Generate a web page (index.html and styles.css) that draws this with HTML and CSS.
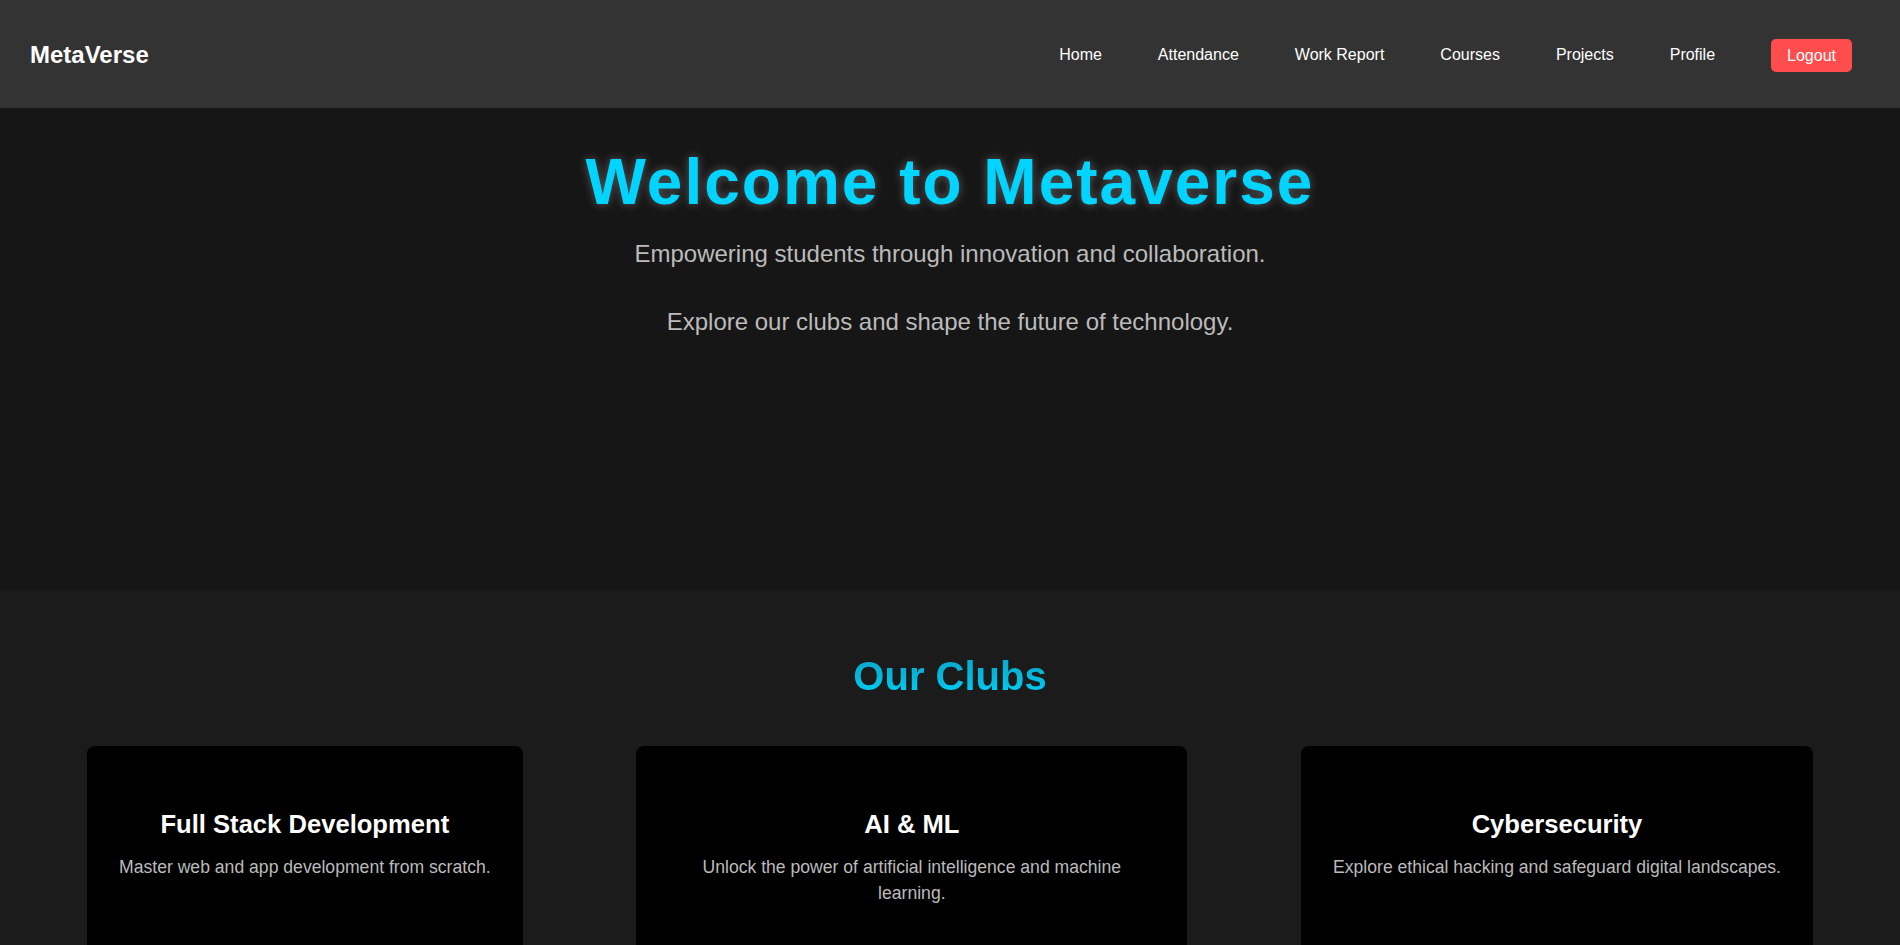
FILE: index.html
```html
<!DOCTYPE html>
<html lang="en">
<head>
<meta charset="utf-8">
<title>MetaVerse</title>
<link rel="stylesheet" href="styles.css">
</head>
<body>
<header class="topbar">
  <div class="logo">MetaVerse</div>
  <nav>
    <ul class="nav-list">
      <li><a class="nav-link" href="#">Home</a></li>
      <li><a class="nav-link" href="#">Attendance</a></li>
      <li><a class="nav-link" href="#">Work Report</a></li>
      <li><a class="nav-link" href="#">Courses</a></li>
      <li><a class="nav-link" href="#">Projects</a></li>
      <li><a class="nav-link" href="#">Profile</a></li>
      <li><a class="logout-btn" href="#">Logout</a></li>
    </ul>
  </nav>
</header>

<section class="hero">
  <h1 class="hero-title">Welcome to Metaverse</h1>
  <p class="hero-sub">Empowering students through innovation and collaboration.</p>
  <p class="hero-sub second">Explore our clubs and shape the future of technology.</p>
</section>

<section class="clubs">
  <h2 class="clubs-title">Our Clubs</h2>
  <div class="club-grid">
    <div class="club-card">
      <h3 class="club-name">Full Stack Development</h3>
      <p class="club-desc">Master web and app development from scratch.</p>
    </div>
    <div class="club-card">
      <h3 class="club-name">AI &amp; ML</h3>
      <p class="club-desc">Unlock the power of artificial intelligence and machine learning.</p>
    </div>
    <div class="club-card">
      <h3 class="club-name">Cybersecurity</h3>
      <p class="club-desc">Explore ethical hacking and safeguard digital landscapes.</p>
    </div>
  </div>
</section>
</body>
</html>
```

FILE: styles.css
```css
* {
  box-sizing: border-box;
}

html, body {
  margin: 0;
  padding: 0;
}

body {
  font-family: "Liberation Sans", Arial, sans-serif;
  background: #1b1b1b;
  color: #fff;
}

.topbar {
  height: 108px;
  background: #333333;
  display: flex;
  align-items: center;
  justify-content: space-between;
  padding: 0 48px 0 30px;
}

.logo {
  font-size: 24px;
  font-weight: bold;
  color: #fff;
  position: relative;
  top: 1px;
}

.nav-list {
  list-style: none;
  margin: 2px 0 0;
  padding: 0;
  display: flex;
  align-items: center;
  gap: 56px;
}

.nav-link {
  color: #fff;
  text-decoration: none;
  font-size: 16px;
}

.logout-btn {
  display: block;
  background: #ff4d4d;
  color: #fff;
  text-decoration: none;
  font-size: 16px;
  line-height: 17px;
  padding: 8px 16px;
  border-radius: 5px;
}

.hero {
  height: 482px;
  background: #161616;
  text-align: center;
  padding-top: 37px;
}

.hero-title {
  margin: 0;
  font-size: 64px;
  font-weight: bold;
  letter-spacing: 2px;
  color: #00d4ff;
  line-height: normal;
  text-shadow: 0 0 10px rgba(255, 255, 255, 0.3);
}

.hero-sub {
  margin: 21px 0 0;
  font-size: 24px;
  color: #bbbbbb;
  line-height: normal;
}

.hero-sub.second {
  margin-top: 40px;
}

.clubs {
  background: #1b1b1b;
  padding: 64px 87px 60px;
  text-align: center;
}

.clubs-title {
  margin: 0 0 47px;
  font-size: 40px;
  font-weight: bold;
  line-height: normal;
  background: linear-gradient(180deg, #0aa6c8 0%, #05b8dc 50%, #00d4ff 100%);
  -webkit-background-clip: text;
  background-clip: text;
  color: transparent;
  display: inline-block;
}

.club-grid {
  display: grid;
  grid-template-columns: max-content 551px max-content;
  justify-content: space-between;
}

.club-card {
  background: #000;
  border-radius: 8px;
  padding: 64px 32px 70px;
  min-height: 260px;
}

.club-name {
  margin: 0;
  font-size: 25.6px;
  font-weight: bold;
  color: #fff;
  line-height: normal;
}

.club-desc {
  margin: 15px 0 0;
  font-size: 17.6px;
  line-height: 1.5;
  color: #bbbbbb;
}
```
